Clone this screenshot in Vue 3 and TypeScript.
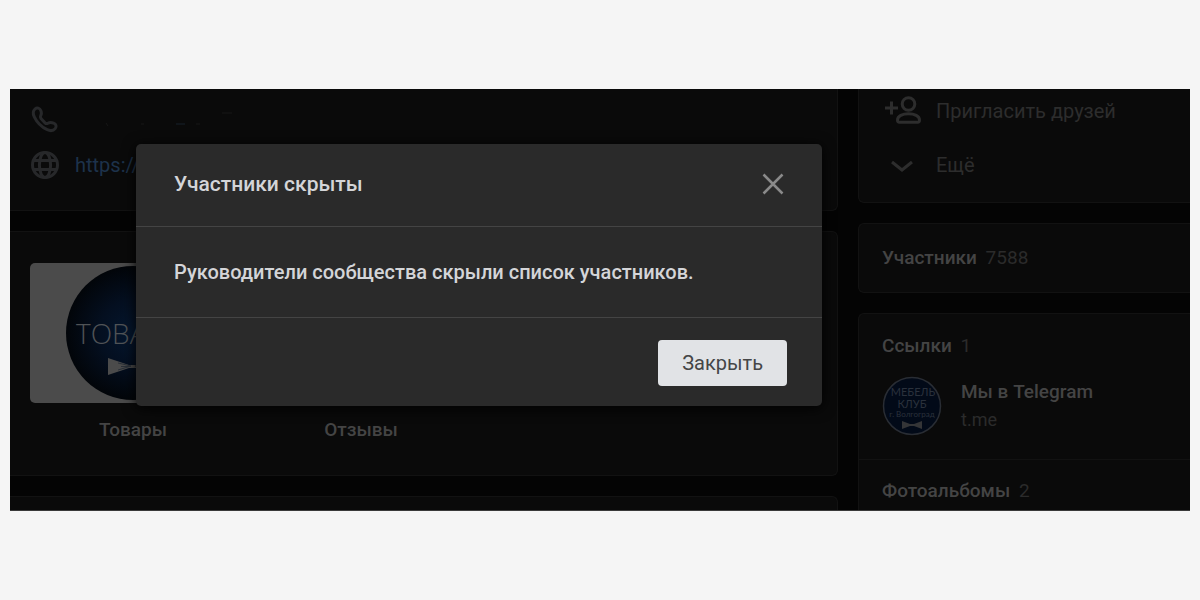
<script setup lang="ts">
import { ref } from 'vue'

interface Shelf {
  label: string
  cover: boolean
}

const dialogOpen = ref(true)
const shelves: Shelf[] = [
  { label: 'Товары', cover: true },
  { label: 'Отзывы', cover: false },
]
</script>

<template>
  <main class="page">
    <div class="stage">
      <div class="community">
        <div class="column">
          <section class="card contacts">
            <div class="contact">
              <svg class="contact-icon" viewBox="0 0 30 30" aria-hidden="true">
                <path
                  d="M5 5C7 3.2 9.8 4 10.8 6.5C11.7 8.7 11.6 10.3 10.7 11.7C10 12.8 10.2 13.6 11 14.6L15 18.8C16 19.7 16.9 19.8 17.9 19.2C19.5 18.2 21.4 18.2 23.6 19.1C26.1 20.1 26.9 22.6 25.2 24.6C23.4 26.7 20.3 27.1 17.2 25.7C11.4 23 7 18.6 4.3 12.9C2.9 9.9 3 6.8 5 5Z"
                />
              </svg>
              <svg class="smudge" viewBox="0 0 170 24" aria-hidden="true">
                <path d="M31 16l2 3M66 17h3" />
                <path class="smudge-blue" d="M101 17h9" />
                <path d="M121 17h4M147 6h10" />
              </svg>
            </div>
            <div class="contact">
              <svg class="contact-icon" viewBox="0 0 30 30" aria-hidden="true">
                <circle cx="15" cy="15" r="12.5" />
                <ellipse cx="15" cy="15" rx="5.6" ry="12.5" />
                <path d="M3.5 10.5h23M3.5 19.5h23" />
              </svg>
              <a class="site" href="#">https://</a>
            </div>
          </section>

          <section class="card shelves">
            <div v-for="shelf in shelves" :key="shelf.label" class="shelf">
              <div class="cover" :class="{ filled: shelf.cover }">
                <svg v-if="shelf.cover" class="cover-art" viewBox="0 0 134 134" aria-hidden="true">
                  <defs>
                    <radialGradient id="navy">
                      <stop offset="0" stop-color="#05172f" />
                      <stop offset="0.5" stop-color="#040f20" />
                      <stop offset="1" stop-color="#020509" />
                    </radialGradient>
                  </defs>
                  <circle cx="67" cy="67" r="67" fill="url(#navy)" />
                  <text x="10" y="78" class="cover-text">ТОВАРЫ</text>
                  <path d="M42 92L63 99H71L92 92V109L71 102H63L42 109Z" fill="#4b4b4b" />
                  <path d="M52 97L65 100L52 104M55 100.5H65M82 97L69 100L82 104" stroke="#2a3038" fill="none" />
                </svg>
              </div>
              <span class="shelf-label">{{ shelf.label }}</span>
            </div>
          </section>

          <section class="card next"></section>
        </div>

        <aside class="column">
          <section class="card actions">
            <button type="button" class="action">
              <svg class="action-icon" viewBox="0 0 40 30" aria-hidden="true">
                <path d="M2 12h13M8.5 5.5v13" />
                <circle cx="25.5" cy="8" r="6.3" />
                <path d="M14.5 24C14.5 20 19.5 17.7 25.5 17.7S36.5 20 36.5 24C36.5 26 36 26.3 34.5 26.3H16.5C15 26.3 14.5 26 14.5 24Z" />
              </svg>
              Пригласить друзей
            </button>
            <button type="button" class="action">
              <svg class="action-icon" viewBox="0 0 40 30" aria-hidden="true">
                <path d="M9 12L19 20L29 12" />
              </svg>
              Ещё
            </button>
          </section>

          <section class="card members">
            <h2 class="heading">Участники <span class="count">7588</span></h2>
          </section>

          <section class="card">
            <div class="links">
              <h2 class="heading">Ссылки <span class="count">1</span></h2>
              <div class="link-row">
                <svg class="avatar" viewBox="0 0 60 60" aria-hidden="true">
                  <circle cx="30" cy="30" r="28.5" fill="#020a18" stroke="#292d34" stroke-width="1.5" />
                  <g class="avatar-text">
                    <text x="31" y="20" font-size="11">МЕБЕЛЬ</text>
                    <text x="30" y="32" font-size="11">КЛУБ</text>
                    <text x="30" y="41" font-size="8">г. Волгоград</text>
                  </g>
                  <path d="M20 45L28 48H32L40 45V53L32 50H28L20 53Z" fill="#343537" />
                </svg>
                <div class="link-info">
                  <a class="link-title" href="#">Мы в Telegram</a>
                  <span class="link-host">t.me</span>
                </div>
              </div>
            </div>
            <div class="albums">
              <h2 class="heading">Фотоальбомы <span class="count">2</span></h2>
            </div>
          </section>
        </aside>
      </div>

      <div v-if="dialogOpen" class="overlay">
        <div class="dialog" role="dialog" aria-modal="true" aria-labelledby="dialog-title">
          <header class="dialog-head">
            <h1 id="dialog-title" class="dialog-title">Участники скрыты</h1>
            <button type="button" class="dismiss" aria-label="Закрыть окно" @click="dialogOpen = false">
              <svg viewBox="0 0 28 28" aria-hidden="true"><path d="M4.5 4.5L23.5 23.5M23.5 4.5L4.5 23.5" /></svg>
            </button>
          </header>
          <p class="dialog-body">Руководители сообщества скрыли список участников.</p>
          <footer class="dialog-foot">
            <button type="button" class="close" @click="dialogOpen = false">Закрыть</button>
          </footer>
        </div>
      </div>
    </div>
  </main>
</template>

<style>
body {
  margin: 0;
  background: #f5f5f5;
}
</style>

<style scoped>
.page {
  box-sizing: border-box;
  min-height: 100vh;
  padding: 0 10px;
  display: grid;
  align-content: center;
  font-family: Roboto, 'Liberation Sans', sans-serif;
  font-size: 20px;
  line-height: 24px;
}
.stage {
  position: relative;
  overflow: hidden;
  background: #040404;
  border-bottom: 1px solid #3a3a3a;
}
.community {
  display: grid;
  grid-template-columns: minmax(0, 1fr) 332px;
  gap: 20px;
}
.column {
  display: flex;
  flex-direction: column;
  gap: 20px;
}
.card {
  box-sizing: border-box;
  background: #0a0a0a;
  border: 1px solid #121212;
  border-radius: 6px;
}
.column:first-child .card {
  border-left: 0;
  border-top-left-radius: 0;
  border-bottom-left-radius: 0;
}
aside .card {
  border-right: 0;
  border-top-right-radius: 0;
  border-bottom-right-radius: 0;
}
.column > .card:first-child {
  border-top: 0;
  border-top-left-radius: 0;
  border-top-right-radius: 0;
}
.column > .card:last-child {
  flex: 1;
  border-bottom: 0;
  border-bottom-left-radius: 0;
  border-bottom-right-radius: 0;
}
.contacts {
  padding: 15px 20px 30px;
  display: flex;
  flex-direction: column;
  gap: 16px;
}
.contact {
  display: flex;
  align-items: center;
  gap: 15px;
  height: 30px;
}
.contact-icon {
  width: 30px;
  height: 30px;
  fill: none;
  stroke: #27282a;
  stroke-width: 3;
}
.smudge {
  width: 170px;
  height: 24px;
  fill: none;
  stroke: #161616;
}
.smudge-blue {
  stroke: #17202b;
}
.site {
  color: #1d324b;
  text-decoration: none;
}
.shelves {
  padding: 31px 20px 33px;
  display: flex;
  gap: 22px;
}
.shelf {
  width: 206px;
  display: flex;
  flex-direction: column;
  align-items: center;
  gap: 15px;
}
.cover {
  width: 100%;
  height: 140px;
  display: grid;
  place-items: center;
  border-radius: 5px;
}
.filled {
  background: #4b4b4b;
}
.cover-art {
  width: 134px;
  height: 134px;
}
.cover-text {
  font-family: 'Open Sans', sans-serif;
  font-weight: 300;
  font-size: 28px;
  fill: #505356;
}
.shelf-label {
  color: #444444;
  font-size: 19px;
  font-weight: 500;
}
.next {
  min-height: 14px;
}
.actions {
  padding: 7px 24px 23px;
  display: flex;
  flex-direction: column;
  gap: 25px;
}
.action {
  display: flex;
  align-items: center;
  gap: 13px;
  height: 29px;
  padding: 0;
  border: 0;
  background: none;
  color: #2d2d2d;
  font: inherit;
}
.action-icon {
  width: 40px;
  height: 30px;
  fill: none;
  stroke: #2d2d2d;
  stroke-width: 3;
}
.members {
  padding: 22px 23px;
}
.heading {
  margin: 0;
  color: #444444;
  font-size: 19px;
  font-weight: 500;
  line-height: 24px;
}
.count {
  margin-left: 4px;
  color: #2b2b2b;
  font-weight: 400;
}
.links {
  padding: 20px 23px 23px;
  border-bottom: 1px solid #121212;
}
.link-row {
  display: flex;
  align-items: center;
  gap: 19px;
  padding-top: 18px;
}
.avatar {
  width: 60px;
  height: 60px;
}
.avatar-text {
  font-family: Lato, sans-serif;
  text-anchor: middle;
  fill: #2a313c;
}
.link-info {
  display: flex;
  flex-direction: column;
  gap: 4px;
}
.link-title {
  color: #444444;
  font-size: 19px;
  font-weight: 500;
  text-decoration: none;
}
.link-host {
  color: #2b2b2b;
  font-size: 18px;
}
.albums {
  padding: 19px 23px 6px;
}
.overlay {
  position: absolute;
  inset: 0;
  padding: 55px 0 0 126px;
}
.dialog {
  width: 686px;
  max-width: 100%;
  background: #2a2a2a;
  border-radius: 5px;
  box-shadow: 0 2px 14px #000000;
}
.dialog-head {
  display: flex;
  align-items: center;
  justify-content: space-between;
  padding: 26px 35px 28px 38px;
  border-bottom: 1px solid #444444;
}
.dialog-title {
  margin: 0;
  color: #d4d5d8;
  font-size: 21px;
  font-weight: 500;
  line-height: 28px;
}
.dismiss {
  width: 28px;
  height: 28px;
  padding: 0;
  border: 0;
  background: none;
}
.dismiss svg {
  display: block;
  fill: none;
  stroke: #8a8a8a;
  stroke-width: 2.5;
}
.dialog-body {
  margin: 0;
  padding: 33px 38px 33px;
  border-bottom: 1px solid #444444;
  color: #d4d5d8;
  font-weight: 500;
}
.dialog-foot {
  display: flex;
  justify-content: flex-end;
  padding: 22px 35px 20px;
}
.close {
  height: 46px;
  padding: 0 24px;
  border: 0;
  border-radius: 4px;
  background: #e1e3e6;
  color: #454647;
  font: inherit;
}
</style>
